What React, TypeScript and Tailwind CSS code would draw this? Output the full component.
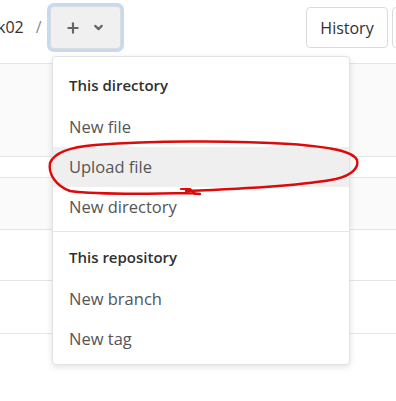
import { Plus, ChevronDown } from 'lucide-react'

const font = { fontFamily: '"Open Sans", "Noto Sans", Arial, sans-serif' }

const itemCls = 'h-10 flex items-center pl-4 text-[16.5px] text-[#555555]'
const headCls = 'h-[43px] flex items-center pl-4 text-[15px] font-semibold text-[#303030]'

export default function App() {
  return (
    <div className="relative w-[396px] h-[401px] bg-white overflow-hidden" style={font}>
      {/* top bar */}
      <div className="h-[64px] border-b border-[#e5e5e5] flex items-start pt-[6px]">
        <span className="-ml-[3px] mt-[9px] text-[16px] text-[#303030]">k02</span>
        <span className="ml-[12px] mt-[9px] text-[16px] text-[#8a8a8a]">/</span>
        <button className="ml-[8px] w-[71px] h-[43px] rounded-[4px] bg-[#f0f0f0] border border-[#dcdcdc] ring-[3px] ring-[#c3d9f4] flex items-center justify-center gap-[11px] text-[#666666]">
          <Plus size={16} strokeWidth={3.2} />
          <ChevronDown size={13} strokeWidth={4} />
        </button>
        <div className="flex-1" />
        <button className="mt-[1px] w-[82px] h-[41px] shrink-0 rounded-[4px] bg-white border border-[#dbdbdb] text-[16px] text-[#303030]">
          History
        </button>
        <div className="mt-[1px] ml-[4px] -mr-[16px] w-[20px] h-[41px] shrink-0 rounded-[4px] border border-[#dbdbdb]" />
      </div>

      {/* background rows */}
      <div className="h-[93px] bg-[#fafafa] border-b border-[#e5e5e5]" />
      <div className="h-[21px] bg-white border-b border-[#e5e5e5]" />
      <div className="h-[52px] bg-[#fafafa] border-b border-[#e5e5e5]" />
      <div className="h-[51px] bg-white border-b border-[#e5e5e5]" />
      <div className="h-[53px] bg-white border-b border-[#e5e5e5]" />

      {/* dropdown menu */}
      <div className="absolute left-[52px] top-[56px] w-[298px] bg-white border border-[#e3e3e3] rounded-[4px] shadow-[0_2px_6px_rgba(0,0,0,0.12)] pt-[7px] pb-[5px]">
        <div className={headCls}>This directory</div>
        <div className={itemCls}>New file</div>
        <div className={itemCls + ' bg-[#efefef]'}>Upload file</div>
        <div className={itemCls}>New directory</div>
        <div className="my-[4px] h-px bg-[#e5e5e5]" />
        <div className={headCls}>This repository</div>
        <div className={itemCls}>New branch</div>
        <div className={itemCls}>New tag</div>
      </div>

      {/* red hand-drawn annotation */}
      <svg className="absolute inset-0 pointer-events-none" width="396" height="401" viewBox="0 0 396 401" fill="none">
        <path
          d="M 186 191 C 240 189, 300 186, 336 179 C 353 175, 359 167, 357 160 C 353 151, 330 147, 290 144 C 230 140, 150 141, 95 145 C 70 147, 54 153, 50 163 C 48 174, 56 186, 70 191 C 100 195, 150 194, 190 193 L 200 194"
          stroke="#dd0a0a"
          strokeWidth="2.4"
          strokeLinecap="round"
          strokeLinejoin="round"
        />
        <path d="M 181 189 L 190 189 L 195 194" stroke="#dd0a0a" strokeWidth="2.2" strokeLinecap="round" strokeLinejoin="round" />
      </svg>
    </div>
  )
}
